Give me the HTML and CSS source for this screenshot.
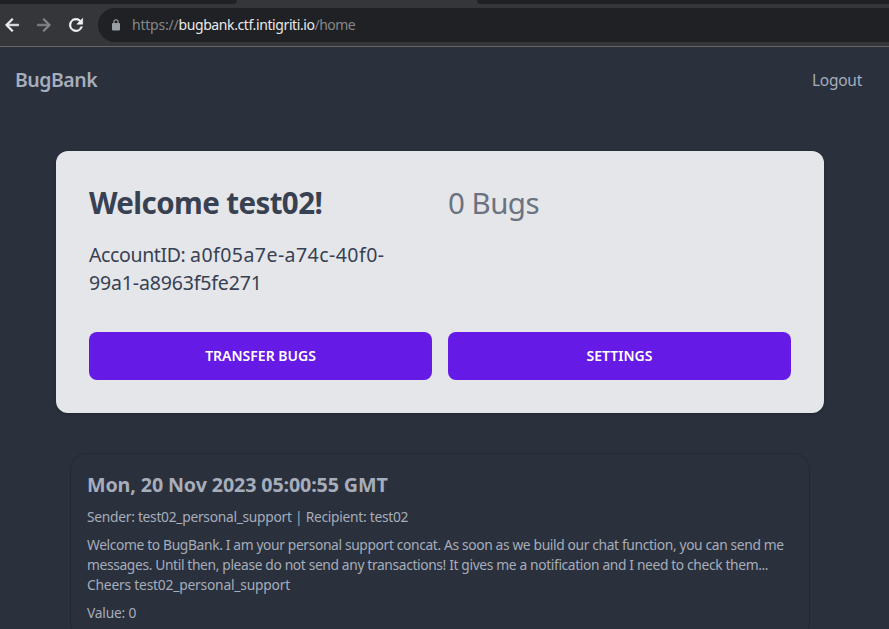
FILE: index.html
```html
<!DOCTYPE html>
<html lang="en">
<head>
<meta charset="utf-8">
<title>BugBank</title>
<link rel="stylesheet" href="styles.css">
</head>
<body>
<header class="browser">
  <div class="tabs"><span class="tab tab-left"></span><span class="tab-active"></span><span class="tab tab-right"></span></div>
  <div class="toolbar">
    <svg class="icon" viewBox="0 0 24 24"><path fill="#f1f3f4" stroke="#f1f3f4" stroke-width=".7" d="M20 11H7.800l5.600-5.600L12 4l-8 8 8 8 1.400-1.400L7.800 13H20z"/></svg>
    <svg class="icon" viewBox="0 0 24 24"><path fill="#85878a" stroke="#85878a" stroke-width=".7" d="M4 13h12.200l-5.600 5.600L12 20l8-8-8-8-1.400 1.400 5.600 5.600H4z"/></svg>
    <svg class="icon" viewBox="0 0 24 24"><path fill="#f1f3f4" stroke="#f1f3f4" stroke-width=".7" d="M17.650 6.350A8 8 0 1 0 19.730 14h-2.080A6 6 0 1 1 12 6c1.660 0 3.140.69 4.220 1.780L13 11h7V4z"/></svg>
    <div class="omnibox">
      <svg class="lock" viewBox="0 0 8 12"><path fill="none" stroke="#9aa0a6" stroke-width="1.100" d="M1.900 5V2.900a2.100 2.100 0 0 1 4.200 0V5"/><rect y="4" width="8" height="7.500" rx="1" fill="#9aa0a6"/></svg>
      <span class="url">https://<b>bugbank.ctf.intigriti.io</b><span class="path">/home</span></span>
    </div>
  </div>
</header>
<nav class="navbar"><span class="brand">BugBank</span><span class="logout">Logout</span></nav>
<main>
  <section class="account">
    <div>
      <h1>Welcome test02!</h1>
      <p class="account-id"><span class="id-label">AccountID: </span><span class="id-start">a0f05a7e-a74c-40f0-</span><br><span class="id-rest">99a1-a8963f5fe271</span></p>
    </div>
    <div class="balance">0 Bugs</div>
    <button>TRANSFER BUGS</button>
    <button>SETTINGS</button>
  </section>
  <article class="message">
    <h2>Mon, 20 Nov 2023 05:00:55 GMT</h2>
    <p class="parties">Sender: test02_personal_support | Recipient: test02</p>
    <p><span class="body-text">Welcome to BugBank. I am your personal support concat. As soon as we build our chat function, you can send me<br>messages. Until then, please do not send any transactions! It gives me a notification and I need to check them...</span><br>Cheers test02_personal_support</p>
    <p>Value: 0</p>
  </article>
</main>
</body>
</html>
```

FILE: styles.css
```css
* { box-sizing: border-box; margin: 0; padding: 0; }
body { height: 629px; overflow: hidden; background: #2a303c; color: #a6adbb; font-family: "Noto Sans", sans-serif; white-space: nowrap; }
.browser { height: 47px; background: #35363a; border-bottom: 1px solid #656565; }
.tabs { height: 4px; display: flex; }
.tab { background: #202124; }
.tab-left { width: 237px; border-bottom-right-radius: 6px; }
.tab-active { width: 240px; }
.tab-right { flex: 1; border-bottom-left-radius: 6px; }
.toolbar { display: flex; align-items: center; height: 42px; padding-left: 2px; }
.icon { width: 20px; height: 20px; margin-right: 12px; flex: none; }
.omnibox { height: 34px; flex: 1; background: #202124; border-radius: 17px 0 0 17px; display: flex; align-items: center; padding-left: 14px; }
.lock { width: 8px; height: 12px; margin-right: 12px; }
.url { font-size: 14px; color: #85878a; letter-spacing: -0.220px; padding-bottom: 1px; }
.url b { font-weight: 400; color: #e8eaed; letter-spacing: -0.400px; }
.path { letter-spacing: -0.550px; }
.navbar { height: 64px; display: flex; align-items: center; justify-content: space-between; padding: 1px 27px 0 15px; }
.brand { font-size: 19.500px; font-weight: 600; letter-spacing: -0.500px; }
.logout { font-size: 15.500px; letter-spacing: -0.250px; }
main { height: 518px; overflow: hidden; padding: 40px 65px 0 56px; }
.account { width: 768px; height: 262px; background: #e5e6ea; border-radius: 12px; padding: 34px 33px 33px; display: grid; grid-template-columns: 1fr 1fr; grid-template-rows: 147px 48px; column-gap: 16px; color: #374151; box-shadow: 0 1px 3px rgba(0,0,0,.2); }
h1 { font-size: 29.500px; line-height: 36px; font-weight: 700; letter-spacing: -0.600px; margin-bottom: 20px; }
.account-id { font-size: 19.500px; line-height: 28px; }
.id-label { letter-spacing: -0.380px; }
.id-start { letter-spacing: 0.450px; }
.id-rest { letter-spacing: -0.150px; }
.balance { font-size: 29.500px; line-height: 36px; color: #6b7280; letter-spacing: -0.520px; }
button { border: 0; border-radius: 8px; background: #661ae6; color: #fff; font: 600 14px "Noto Sans", sans-serif; padding-bottom: 2px; }
.message { width: 740px; height: 186px; margin: 40px 0 0 14px; border: 1px solid #242933; border-radius: 16px; padding: 17px 16px; font-size: 13.800px; line-height: 20px; letter-spacing: -0.200px; }
h2 { font-size: 19.700px; line-height: 28px; font-weight: 700; margin-bottom: 8px; letter-spacing: -0.130px; }
.message p { margin-bottom: 8px; }
.message .parties { letter-spacing: -0.280px; }
.body-text { letter-spacing: -0.360px; }
```
